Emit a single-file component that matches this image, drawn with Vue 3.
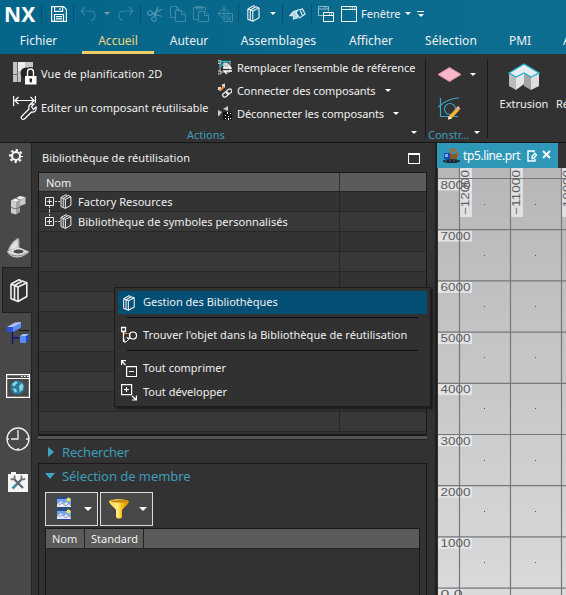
<script setup>
const tabs = [
  { label: 'Fichier', cls: 'fichier' },
  { label: 'Accueil', cls: 'accueil' },
  { label: 'Auteur', cls: 'auteur' },
  { label: 'Assemblages', cls: 'assemblages' },
  { label: 'Afficher', cls: 'afficher' },
  { label: 'Sélection', cls: 'selection' },
  { label: 'PMI', cls: 'pmi' },
  { label: 'A', cls: 'last' },
]
const treeRows = ['Factory Resources', 'Bibliothèque de symboles personnalisés', '', '', '', '', '', '', '', '', '', '']
const step = 51.2
const horizontals = [8000, 7000, 6000, 5000, 4000, 3000, 2000, 1000, 0].map((value, i) => ({
  value,
  y: 10.5 + i * step,
}))
const verticals = [
  { value: '−12000', x: 22 },
  { value: '−11000', x: 73 },
  { value: '−10000', x: 124 },
]
</script>

<template>
  <div class="app">
    <svg class="defs" width="0" height="0">
      <symbol id="books" viewBox="0 0 18 24">
        <g fill="none" stroke="currentColor" stroke-width="1.6" stroke-linejoin="round">
          <path d="M1 5.500 9 1.200l2 1M1 5.500V20l3 1.500M4.500 7l8-4.500 1.800.800M4.500 7v14.500L8 23M1 5.500 4.500 7 8 8.500M8 8.500l8.800-4.300V18L8 23zM14.300 3.300l2.500.900" />
        </g>
      </symbol>
    </svg>

    <header class="top">
      <div class="quick">
        <span class="brand">NX</span>
        <i class="bar b1"></i>
        <svg class="save" width="16" height="16" viewBox="0 0 16 16" fill="none" stroke="#fff" stroke-width="1.2">
          <path d="M.6.6h12l2.8 2.8v12H.6zM3.6.6v4.8h8V.6M9 2v2M3.5 15.4V8.5h9v6.9M5 10.7h6M5 12.9h6" />
        </svg>
        <i class="bar b2"></i>
        <svg class="undo" width="16" height="16" viewBox="0 0 16 16" fill="none" stroke="#3585a3" stroke-width="1.1">
          <path d="M5 1 1 5l4 4M1 5h10c5 0 5.500 8 0 9.500" />
        </svg>
        <i class="caret dim c1"></i>
        <svg class="redo" width="16" height="16" viewBox="0 0 16 16" fill="none" stroke="#3585a3" stroke-width="1.1">
          <path d="m11 1 4 4-4 4M15 5H5C0 5-.5 13 5 14.500" />
        </svg>
        <i class="bar b3"></i>
        <svg class="cut" width="16" height="16" viewBox="0 0 16 16" fill="none" stroke="#4b94ae" stroke-width="1.1">
          <circle cx="3" cy="7" r="2.300" /><circle cx="7" cy="13" r="2.300" />
          <path d="m5 8 10 2.200M5 8l10-4.500-8 3.500M8 11l3-10-4 9" />
        </svg>
        <svg class="copy" width="16" height="16" viewBox="0 0 16 16" fill="none" stroke="#4089a5">
          <path d="M5.500 11.500h-5V.5h6l3 3v1M6.500.5v3h3M5.500 4.500h6.500l3.500 3.500v7.500h-10zM11.500 4.500v4h4" />
        </svg>
        <svg class="paste" width="16" height="16" viewBox="0 0 16 16" fill="none" stroke="#4089a5">
          <path d="M4.500 13.500h-4v-12h12v3M3.500 3V.5h6V3zM5.500 5.500h6.500l3.500 3.500v6.500h-10zM11.500 5.500v4h4" />
        </svg>
        <svg class="aim" width="16" height="16" viewBox="0 0 16 16" fill="none" stroke="#4089a5">
          <circle cx="7" cy="7.500" r="4.500" /><path d="M7 0v15M0 7.500h15.500v8H7M7 7.500l6 6m0-4v4H9" />
        </svg>
        <i class="bar b4"></i>
        <svg class="qbook" width="13" height="17"><use href="#books" /></svg>
        <i class="caret c2"></i>
        <i class="bar b5"></i>
        <svg class="touch" width="17" height="12" viewBox="0 0 17 12" fill="none" stroke="#d7edf5" stroke-width="1.200">
          <path fill="#a9cfdd" d="M1 7.500 4.500 3.500 8 2.500 7 5l2 2.500-1 2.500-3.500 1L5 8z" />
          <path d="m8 2.500 5.500-1.500L16 6l-5.500 4L7 5zM11 1.700l2.500 6" />
        </svg>
        <i class="bar b6"></i>
        <svg class="wins" width="16" height="16" viewBox="0 0 16 16" fill="none" stroke="#fff">
          <path stroke="#8ebbcb" d="M5 9.500H.5v-9h10V5M.5 3h10M6 1.800h1m1 0h1" />
          <path fill="#0b698c" d="M5.500 6.500h10v9h-10zM5.500 9.500h10M11 8h1m1 0h1" />
        </svg>
        <svg class="win" width="16" height="16" viewBox="0 0 16 16" fill="none" stroke="#fff">
          <path d="M.5.500h15v15H.5zM.5 3.500h15M9 2h1M11 2h1M13 2h1" />
        </svg>
        <span class="fenetre">Fenêtre</span>
        <i class="caret c3"></i>
        <span class="overflow"><i class="caret"></i></span>
      </div>
      <nav class="tabs">
        <span v-for="t in tabs" :key="t.label" class="tab" :class="t.cls">{{ t.label }}</span>
      </nav>
    </header>

    <section class="ribbon">
      <div class="group actions">
        <div class="cols">
          <div class="col left">
            <div class="cmd">
              <svg width="24" height="24" viewBox="0 0 24 24">
                <path fill="#c4c4c4" d="M0 0h20v10H0zM0 10h8v10H0z" /><path fill="#ededed" d="M5 0h7v9H5z" />
                <path fill="none" stroke="#6d6d6d" d="M4.500 0v20M0 12.500h4" />
                <circle cx="13" cy="11" r="5.500" fill="#262626" />
                <path d="M14.500 14v-4c0-4 6-4 6 0v4" fill="none" stroke="#222" stroke-width="4" />
                <path d="M14.500 14v-4c0-4 6-4 6 0v4" fill="none" stroke="#fff" stroke-width="1.400" />
                <path fill="#fff" d="M12 14h11.500v8.500H12z" /><path fill="#222" d="M16.500 16.500h2.500v2l-.5 2h-1.500l-.5-2z" />
              </svg>
              <span class="t-vue">Vue de planification 2D</span>
            </div>
            <div class="cmd">
              <svg width="24" height="26" viewBox="0 0 24 26" fill="none" stroke="#fff" stroke-width="1.200">
                <path d="M.6 1v10M22.400 1v7M2 5.500h19M5.500 2 2 5.500 5.500 9M17.500 2l3.500 3.500L17.500 9" />
                <path fill="#323232" d="m9 21 7-7c-1-3 1-6 5-5l-2.500 2.500 2 3L23 12c1 4-2 5.500-4.500 5L12 23.500C9.500 26 7 23 9 21z" />
              </svg>
              <span class="t-edit">Editer un composant réutilisable</span>
            </div>
          </div>
          <div class="col right">
            <div class="cmd">
              <svg width="14" height="15" viewBox="0 0 14 15" fill="none">
                <path stroke="#bbb" d="M2 2v10h10V2M0 .5h3v3H0zM0 11h3v3H0z" /><path stroke="#24b3cc" stroke-width="1.500" d="M1 1.500h12M2 7 7 2" />
                <circle cx="8" cy="5.500" r="3" fill="#ccc" /><path stroke="#fff" stroke-width="1.300" d="M5 8h8l-3-3M14 11H6l3 3" />
              </svg>
              <span class="t-remp">Remplacer l'ensemble de référence</span>
            </div>
            <div class="cmd">
              <svg width="14" height="15" viewBox="0 0 14 15" fill="none">
                <path fill="#ddd" d="M4 1.500 7 .5v4l-3 1zM0 4h3v4L0 7z" /><path stroke="#e68a35" stroke-width="2" d="m2 7.500 4-4" />
                <g stroke="#eee" stroke-width="1.300"><rect x="4.500" y="9.500" width="6" height="4" rx="2" transform="rotate(-35 7.500 11.500)" /><rect x="8" y="6.500" width="6" height="4" rx="2" transform="rotate(-35 11 8.500)" /></g>
              </svg>
              <span class="t-conn">Connecter des composants</span><i class="caret"></i>
            </div>
            <div class="cmd">
              <svg width="14" height="15" viewBox="0 0 14 15">
                <path fill="#ccc" d="m5 3 5-3v5zM0 4l4 2-3 4H0z" /><path fill="#161616" d="M5 6h9v8H5z" />
                <path fill="#fff" d="M9 6h1v2H9zM12 7h1v1h-1zM7 9h1v1H7zM10 10h1v1h-1zM7 12h1v1H7zM10 12h1v2h-1zM12 12h1v1h-1z" />
              </svg>
              <span class="t-deco">Déconnecter les composants</span><i class="caret"></i>
            </div>
          </div>
        </div>
        <div class="foot"><span class="t-actions">Actions</span><i class="caret"></i></div>
      </div>
      <div class="group constr">
        <div class="plane">
          <svg width="25" height="15" viewBox="0 0 25 15"><path fill="#f7b9c9" stroke="#e08fa9" d="m1 7.500 11.500-7 11.500 7-11.500 7z" /></svg>
          <i class="caret"></i>
        </div>
        <svg class="sketch" width="24" height="24" viewBox="0 0 24 24" fill="none">
          <path stroke="#35a9c8" stroke-width="1.200" d="M2.500 1v18.500H20M0 10C7 4 14 1 21 1" /><circle cx="12" cy="12" r="5.500" stroke="#35a9c8" stroke-width="1.200" />
          <path fill="#f4b736" stroke="#9b7024" stroke-width=".5" d="m11 19 7.500-8 2.500 2.500-7.500 8-3.500 1z" /><path fill="#f6a9a0" d="m18 11 2-2 2.500 2.500-2 2z" /><path fill="#fff" d="m11 19 2.500 2.500-3.500 1z" />
        </svg>
        <div class="foot"><span class="t-constr">Constr...</span><i class="caret"></i></div>
      </div>
      <div class="group extr">
        <div class="big">
          <svg width="32" height="28" viewBox="0 0 32 28">
            <path fill="#bbb" d="M1 10v13l7 4V13z" /><path fill="#e4e4e4" d="m8 13 8-4v12l-8 6z" /><path fill="#a5a5a5" d="m16 9 7 4v14l-7-4z" /><path fill="#dedede" d="m23 13 8-3v13l-8 4z" />
            <path fill="#e6eef0" stroke="#23afd0" stroke-width="1.300" d="m1 10 15-9 15 9-8 4-7-4-8 4z" />
          </svg>
          <span class="t-extr">Extrusion</span>
        </div>
        <span class="t-re">Ré</span>
      </div>
    </section>

    <main class="body">
      <aside class="rail">
        <div class="slot gear">
          <svg width="14" height="14" viewBox="0 0 14 14" fill="none" stroke="#fff"><circle cx="7" cy="7" r="4" stroke-width="2" /><circle cx="7" cy="7" r="6" stroke-width="2" stroke-dasharray="2.200 2.512" stroke-dashoffset="1" /></svg>
        </div>
        <div class="slot s1">
          <svg width="16" height="21" viewBox="0 0 16 21">
            <path fill="#cfcfcf" d="M1 5.500 6 7v12.500L1 18z" /><path fill="#a4a4a4" d="m6 7 4-2v12l-4 2.500z" />
            <path fill="#f0f0f0" d="m1 5.500 9-4.500 5.500 1.300L6 7z" /><path fill="#c9c9c9" d="m10 5 5.500-2.700V9L10 11z" />
            <path fill="none" stroke="#595959" stroke-width=".8" d="M1 12.500 6 14l4-2M5.500 3.200 10.500 5" />
          </svg>
        </div>
        <div class="slot s2">
          <svg width="22" height="22" viewBox="0 0 22 22">
            <path fill="#a8a8a8" d="M1 13C3 7 7 3 11 1c2 0 1.500 6 1.500 10z" /><path fill="#e0e0e0" d="M2 13C4 8 7 4.500 10.500 2.500L11 10z" />
            <path fill="#d4d4d4" d="m0 14 11-4 11 4.500c0 2-7 6-12 6S1 18 0 14z" /><ellipse cx="11.500" cy="14.500" rx="5.500" ry="2.600" fill="#484848" stroke="#f2f2f2" />
            <path stroke="#858585" fill="none" d="M.5 15.500c4 5 15 4 21 0" />
          </svg>
        </div>
        <div class="slot s3"><svg class="bookicon" width="18" height="25"><use href="#books" /></svg></div>
        <div class="slot s4">
          <svg width="24" height="24" viewBox="0 0 24 24">
            <path fill="#2b50d6" d="m1 6 6 0v5L1 11z" /><path fill="#5d89f5" d="m7 6 8-4v4.500L7 11z" /><path fill="#a9c4ff" d="m1 6 8-4.500L15 1v1L7 6z" />
            <path stroke="#111175" fill="none" stroke-width="1.400" d="M6.500 11v12M6.500 17H13" /><path stroke="#171717" d="M13 9.500h10" />
            <path fill="#5d89f5" d="M14 15h6v7h-6z" /><path fill="#2348c4" d="m20 15 3-2v6l-3 3z" /><path fill="#a9c4ff" d="m14 15 3-2h6l-3 2z" />
          </svg>
        </div>
        <div class="slot s5">
          <svg width="24" height="24" viewBox="0 0 24 24" fill="none"><path stroke="#fff" stroke-width="1.200" d="M.6.600h22.800v22.800H.6zM.6 4.500h22.800M15 2.500h1.500M18 2.500h1.500M21 2.500h1.500" /><circle cx="11.500" cy="13.500" r="7" fill="#257d99" /><path fill="#8fd3e3" d="m6 10 4-3 2 2-2 1-1 2-2 0zM13 12l3-3 1.500 3-1 4-3 2 0-3zM7 14l3 1 1 2-1 2-2-2z" /></svg>
        </div>
        <div class="slot s6">
          <svg width="24" height="24" viewBox="0 0 24 24" fill="none" stroke="#f0f0f0" stroke-width="1.300"><circle cx="12" cy="12" r="11" /><path d="M12 3v9H5M12 21v2M20 12h3M1 12h2" /></svg>
        </div>
        <div class="slot s7">
          <svg width="20" height="20" viewBox="0 0 20 20" fill="none">
            <path fill="#f5f5f5" d="M0 2h3V0h5v2h12v18H0z" />
            <path stroke="#59676a" stroke-width="2.200" d="m6 7 9 9M14 7l-9 9" />
            <path stroke="#6a777a" stroke-width="1.800" d="M3 6.500c2 2 4.500 0 3.500-3M17 6.500c-2 2-4.500 0-3.500-3" /><path stroke="#3d94a3" stroke-width="2.500" d="m4.500 16.500 4-4" />
          </svg>
        </div>
      </aside>

      <section class="panel">
        <div class="title"><span class="t-title">Bibliothèque de réutilisation</span><i class="maxi"></i></div>
        <div class="tree">
          <div class="thead"><span>Nom</span></div>
          <div v-for="(row, i) in treeRows" :key="i" class="trow">
            <div class="cell">
              <template v-if="row">
                <svg class="plus" width="15" height="20" viewBox="0 0 15 20" fill="none" stroke="#eee"><path d="M.5 6.500h8v8h-8zM2 10.500h5M4.500 8v5" /><path stroke="#ccc" stroke-dasharray="2 1" d="M10 10.500h5" /><path v-if="i === 0" stroke="#ccc" stroke-dasharray="2 1" d="M4.500 15v5" /><path v-else stroke="#ccc" stroke-dasharray="2 1" d="M4.500 0v6" /></svg>
                <svg class="tbook" width="12" height="15"><use href="#books" /></svg>
                <span :class="'t-row' + i">{{ row }}</span>
              </template>
            </div>
          </div>
        </div>
        <div class="splitter"></div>
        <div class="fold search"><i class="tri closed"></i><span class="t-rech">Rechercher</span></div>
        <div class="member">
          <div class="fold"><i class="tri"></i><span class="t-sel">Sélection de membre</span></div>
          <div class="buttons">
            <div class="btn">
              <svg width="14" height="24" viewBox="0 0 14 24"><g v-for="y in [0, 12]" :key="y" :transform="`translate(0 ${y})`"><path fill="#234a9c" d="M0 0h14v11H0z" /><path fill="#72a6ec" d="M0 2h14v6H0z" /><circle cx="11.500" cy="2.500" r="2" fill="#ffe34b" /><path fill="#e9e6f5" d="m0 8 4-4 3 3 2-2 5 4v1H0z" /><path stroke="#9a97bd" d="m2 8 3-2 4 3 2-2" fill="none" /></g></svg>
              <i class="caret big-caret"></i>
            </div>
            <div class="btn">
              <svg width="20" height="20" viewBox="0 0 20 20"><defs><linearGradient id="gold"><stop stop-color="#ffd83f" /><stop offset=".45" stop-color="#ffe98a" /><stop offset=".6" stop-color="#ffc515" /><stop offset="1" stop-color="#d08e05" /></linearGradient></defs><path fill="url(#gold)" d="M0 2c4-2.500 16-2.500 20 0 0 3-5 6-7 9v7c-1 2-5 2-6 0v-7C5 8 0 5 0 2z" /><ellipse cx="10" cy="2.300" rx="8.500" ry="1.300" fill="#c68a12" /></svg>
              <i class="caret big-caret"></i>
            </div>
          </div>
          <div class="table"><div class="thead2"><span class="h-nom">Nom</span><span class="h-std">Standard</span></div></div>
        </div>
      </section>

      <section class="view">
        <div class="doc-tabs">
          <div class="doc">
            <svg width="17" height="16" viewBox="0 0 17 16"><path fill="none" stroke="#a8672f" stroke-width="2" d="m7 7 1-5.500 4 .5 3.500 6" /><path fill="#1748bd" d="M1 5h6v6H1z" /><path fill="#77aef8" d="M2 6h3v3H2z" /><path fill="#8a5a2c" d="M7 6h7v5H7z" /><path fill="#16212c" d="M0 13c0-2.500 17-2.500 17 0s-17 3-17 0z" /><path stroke="#5d6b78" stroke-dasharray="2 2" d="M2 13h13" /></svg>
            <span class="t-doc">tp5.line.prt</span>
            <svg class="note" width="10" height="12" viewBox="0 0 10 12" fill="none" stroke="#fff" stroke-width="1.400"><path d="M7 2.500V1H1v10h7V9M5 8.500V6.500L8 3.500l1.500 1.500-3 3.500z" /></svg>
            <svg class="close" width="9" height="9" viewBox="0 0 9 9" stroke="#fff" stroke-width="2"><path d="m1 1 7 7M8 1 1 8" /></svg>
          </div>
        </div>
        <svg class="grid" width="128" height="427" viewBox="0 0 128 427">
          <g fill="#e8e8e9" fill-opacity=".85">
            <rect v-for="h in horizontals" :key="h.value" x="0" :y="h.y + 1" :width="h.value ? 34 : 25" height="11" />
            <rect v-for="v in verticals" :key="v.value" :x="v.x" y="0" width="12" height="49" />
          </g>
          <g class="lines">
            <line v-for="h in horizontals" :key="h.value" x1="0" x2="128" :y1="h.y" :y2="h.y" />
            <line v-for="v in verticals" :key="v.value" y1="0" y2="427" :x1="v.x - 0.5" :x2="v.x - 0.5" />
          </g>
          <g class="nums">
            <template v-for="h in horizontals" :key="h.value">
              <text v-if="h.value" x="2.500" :y="h.y + 10" textLength="30" lengthAdjust="spacingAndGlyphs">{{ h.value }}</text>
              <text v-else x="2.500" :y="h.y + 10" textLength="22" lengthAdjust="spacingAndGlyphs">0.0</text>
            </template>
            <text v-for="v in verticals" :key="v.value" :transform="`translate(${v.x + 9} 47) rotate(-90)`" textLength="45" lengthAdjust="spacingAndGlyphs">{{ v.value }}</text>
          </g>
          <g fill="#555">
            <template v-for="h in horizontals" :key="h.value"><rect v-for="x in [46, 97]" :key="x" :x="x" :y="Math.round(h.y + 25)" width="1" height="1" /></template>
          </g>
        </svg>
      </section>
    </main>

    <div class="menu">
      <div class="item active"><svg class="mbook" width="12" height="16"><use href="#books" /></svg><span class="t-gest">Gestion des Bibliothèques</span></div>
      <hr />
      <div class="item find">
        <svg width="16" height="17" viewBox="0 0 16 17" fill="none" stroke="#fff"><path d="M.5 1.500h4v4h-4zM2.500 6v10" stroke-width="1.300" /><path stroke="#df8a42" d="M3 7.500h6v4H5" /><circle cx="12" cy="9.500" r="3.500" stroke-width="1.200" /><path d="m9 12-4 4H3v-3M6 12l2 1" /></svg>
        <span class="t-trou">Trouver l'objet dans la Bibliothèque de réutilisation</span>
      </div>
      <hr />
      <div class="item">
        <svg width="16" height="17" viewBox="0 0 16 17" fill="none" stroke="#fff" stroke-width="1.200"><path d="M5.600 6.600h10v10h-10zM8 11.500h5M4.500 5 .6 1M.6 5V.6H5" /></svg>
        <span class="t-comp">Tout comprimer</span>
      </div>
      <div class="item">
        <svg width="16" height="17" viewBox="0 0 16 17" fill="none" stroke="#fff" stroke-width="1.200"><path d="M.6.600h10v10H.6zM3 5.500h5M5.500 3v5M11 12l4.400 4M15.400 11.500v4.500h-4.500" /></svg>
        <span class="t-deve">Tout développer</span>
      </div>
    </div>
  </div>
</template>

<style>
body { background: #323232; overflow: hidden; }
</style>

<style scoped>
.app { position: relative; display: flex; flex-direction: column; width: 566px; height: 595px; overflow: hidden; background: #323232; color: #f0f0f0; font: 12px/16px "Noto Sans", "Open Sans", sans-serif; white-space: nowrap; }
.app svg { display: block; flex: none; }
.app span { flex: none; }
.app .defs { position: absolute; }
.caret { flex: none; width: 0; height: 0; border: 3px solid transparent; border-top-color: #fff; border-bottom: 0; }

.top { height: 54px; flex: none; background: linear-gradient(90deg, #04658a, #0d6e90); }
.quick { display: flex; align-items: center; height: 27px; padding-left: 4px; }
.brand { width: 36px; font: bold 21px/26px "Noto Sans", sans-serif; color: #fff; letter-spacing: .3px; }
.bar { flex: none; width: 1px; height: 19px; background: #0a4f6c; }
.b1 { margin-left: 1px; }
.save { margin-left: 9px; }
.b2 { margin-left: 6px; }
.undo { margin-left: 6px; }
.c1 { margin-left: 8px; }
.caret.dim { border-top-color: #8b9ca5; }
.redo { margin-left: 8px; }
.b3 { margin-left: 6px; }
.cut { margin-left: 6px; }
.copy, .paste { margin-left: 7px; }
.aim { margin-left: 8px; }
.b4 { margin-left: 5px; }
.qbook { margin-left: 8px; }
.c2 { margin-left: 10px; }
.b5 { margin-left: 6px; }
.touch { margin-left: 6px; }
.b6 { margin-left: 5px; }
.wins { margin-left: 6px; }
.win { margin-left: 7px; }
.fenetre { width: 44px; margin-left: 4px; font-size: 11px; line-height: 15px; padding-bottom: 1px; }
.overflow { display: flex; justify-content: center; width: 7px; height: 5px; margin-left: 6px; border-top: 1px solid #fff; align-items: flex-end; }
.tabs { display: flex; height: 27px; padding-left: 4px; }
.tab { padding: 6px 0 0; box-sizing: border-box; height: 27px; text-align: center; font-size: 12px; }
.fichier { width: 69px; }
.accueil { width: 72px; margin-left: 9px; color: #f2d478; border-bottom: 3px solid #edcb69; }
.auteur { width: 70px; }
.assemblages { width: 109px; letter-spacing: .1px; }
.afficher { width: 76px; }
.selection { width: 84px; letter-spacing: .1px; }
.pmi { width: 54px; }
.last { padding-left: 16px; }

.ribbon { display: flex; height: 89px; flex: none; border-bottom: 1px solid #161616; box-sizing: border-box; padding-top: 5px; font-size: 11px; }
.group { display: flex; flex-direction: column; height: 79px; box-sizing: border-box; border-right: 1px solid #191919; flex: none; }
.actions { width: 426px; }
.cols { display: flex; height: 68px; flex: none; }
.left { display: flex; flex-direction: column; gap: 10px; width: 205px; padding: 3px 0 0 13px; box-sizing: border-box; width: 218px; }
.left .cmd { gap: 4px; height: 24px; }
.cmd { display: flex; align-items: center; }
.right .cmd { height: 23px; gap: 5px; }
.right { margin-top: -3px; }
.cmd .caret { margin-left: 4px; }
.t-vue { letter-spacing: .1px; }
.t-remp { letter-spacing: -.09px; }
.t-conn, .t-deco { letter-spacing: -.08px; }
.foot { display: flex; align-items: center; flex: none; height: 16px; color: #3f9cb8; }
.actions .foot { justify-content: space-between; padding: 0 8px 0 187px; }
.constr { width: 62px; padding-left: 2px; }
.plane { display: flex; align-items: center; gap: 8px; height: 30px; flex: none; padding-left: 9px; }
.sketch { margin: 8px 0 6px 10px; }
.constr .foot { justify-content: space-between; padding: 0 7px 0 0; }
.foot .caret { margin-top: -5px; }
.extr { flex-direction: row; border-right: 0; padding-top: 4px; }
.big { display: flex; flex-direction: column; align-items: center; width: 72px; gap: 5px; }
.t-re { margin: 33px 0 0 -4px; }

.body { display: flex; flex: 1; min-height: 0; }
.rail { display: flex; flex-direction: column; width: 32px; flex: none; background: #484848; border-right: 1px solid #222; box-sizing: border-box; }
.slot { display: flex; align-items: center; justify-content: center; flex: none; width: 31px; padding-left: 4px; box-sizing: border-box; }
.gear { height: 26px; padding-left: 0; }
.s1 { height: 73px; padding-left: 5px; }
.s2 { height: 25px; align-items: flex-start; }
.s2 svg { margin-top: -5px; }
.s3 { width: 30px; height: 46px; margin: 0 0 0 2px; padding-left: 2px; border: 1px solid #202020; border-right: 0; background: #323232; }
.s4 { height: 39px; }
.s5 { height: 67px; }
.s6 { height: 39px; }
.s7 { height: 47px; }

.panel { display: flex; flex-direction: column; width: 405px; flex: none; padding-left: 6px; box-sizing: border-box; border-right: 2px solid #202020; }
.title { display: flex; align-items: center; justify-content: space-between; height: 29px; padding: 1px 15px 0 4px; box-sizing: border-box; font-size: 11px; }
.t-title { letter-spacing: .07px; margin-top: -1px; }
.maxi { width: 10px; height: 8px; border: 1px solid #fff; border-top-width: 2px; }
.tree { box-sizing: border-box; width: 389px; height: 264px; border: 1px solid #191919; border-bottom-width: 2px; overflow: hidden; font-size: 11px; }
.thead { height: 18px; padding-left: 7px; line-height: 20px; background: linear-gradient(90deg, #5b5b5b 300px, #303030 300px, #303030 301px, #5b5b5b 301px); border-bottom: 1px solid #252525; }
.trow { height: 20px; box-sizing: border-box; border-bottom: 1px solid #272727; background: #333; }
.trow:nth-child(odd) { background: #383838; }
.cell { display: flex; align-items: center; width: 301px; height: 100%; box-sizing: border-box; padding-left: 6px; border-right: 1px solid #272727; }
.cell .plus { margin-top: -1px; }
.cell span { letter-spacing: .05px; }
.tbook { margin: 0 6px 0 0; }
.splitter { width: 389px; height: 3px; background: #555; border-bottom: 1px solid #222; flex: none; }
.fold { display: flex; align-items: center; height: 24px; color: #3d9cb8; font-size: 13px; }
.search { height: 23px; flex: none; }
.t-rech { letter-spacing: -.2px; }
.tri { width: 0; height: 0; margin: 0 7px 0 7px; border: 5.5px solid transparent; border-top: 6px solid #3fa4c1; border-bottom: 0; }
.tri.closed { margin: 0 8px 0 10px; border: 5px solid transparent; border-left: 6px solid #3fa4c1; border-right: 0; }
.member { width: 389px; box-sizing: border-box; height: 132px; flex: none; border: 1px solid #191919; border-bottom: 0; padding-left: 6px; }
.member .fold { margin-left: -7px; height: 24px; }
.t-sel { letter-spacing: -.05px; }
.buttons { display: flex; gap: 2px; margin-top: 4px; }
.btn { display: flex; align-items: center; justify-content: space-between; box-sizing: border-box; width: 53px; height: 34px; padding: 0 5px 0 11px; border: 1px solid #ddd; background: #484848; }
.btn:last-child { padding-left: 8px; }
.big-caret { border-width: 4px; border-bottom: 0; }
.table { width: 375px; height: 70px; box-sizing: border-box; margin-top: 2px; border: 1px solid #191919; font-size: 11px; }
.thead2 { display: flex; height: 19px; line-height: 20px; background: #5b5b5b; border-bottom: 1px solid #252525; }
.thead2 span { box-sizing: border-box; border-right: 1px solid #222; padding-left: 6px; }
.h-nom { width: 39px; }
.h-std { width: 59px; }

.view { display: flex; flex-direction: column; width: 129px; flex: none; }
.doc-tabs { height: 25px; flex: none; }
.doc { display: flex; align-items: center; width: 121px; height: 25px; box-sizing: border-box; padding-left: 6px; background: #2f97b8; }
.t-doc { width: 61px; margin-left: 3px; color: #fff; letter-spacing: -.4px; }
.note { margin-left: 3px; }
.close { margin: -2px 0 0 5px; }
.grid { margin-left: 1px; background: linear-gradient(#b7b7b9, #c6c7c9 50%, #d9dadc); }
.lines { stroke: #77777a; stroke-width: 1.2; }
.nums { fill: #5c5c5e; font: 11px "Liberation Sans", sans-serif; }

.menu { position: absolute; left: 114px; top: 287px; width: 317px; height: 120px; box-sizing: border-box; padding: 3px; border: 1px solid #1d1d1d; background: #313131; box-shadow: 2px 2px 2px #1c1c1c; font-size: 11px; }
.item { display: flex; align-items: center; gap: 6px; height: 24px; padding-left: 3px; }
.item.active { height: 23px; background: #034e74; }
.item .mbook { margin: 0 2px; }
.t-gest { margin-top: -1px; }
.t-trou { letter-spacing: .04px; }
.menu hr { height: 1px; margin: 3px 9px 0; border: 0; background: #101010; }
.item.find { height: 31px; margin-top: 1px; }
.find + hr { margin-top: 0; margin-bottom: 5px; }
</style>
